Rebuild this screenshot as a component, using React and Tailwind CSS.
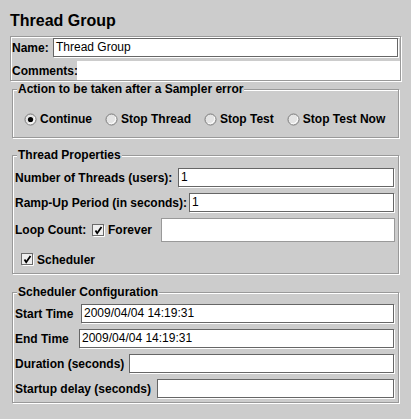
import React from 'react';

const groupBox =
  'relative mx-[2px] border border-[#999999] shadow-[inset_1px_1px_0_#ffffff,1px_1px_0_#ffffff]';

const Legend = ({ children }) => (
  <span className="absolute left-[4px] top-[-7px] bg-[#cccccc] px-[1px] font-bold leading-[13px]">
    {children}
  </span>
);

const Field = ({ value = '', disabled = false, className = '' }) => (
  <div
    className={`flex-1 bg-white pl-[2px] font-normal leading-[17px] whitespace-nowrap ${
      disabled
        ? 'border border-[#999999]'
        : 'border border-[#666666] shadow-[1px_1px_0_#ffffff]'
    } ${className}`}
  >
    {value}
  </div>
);

const Radio = ({ checked, label }) => (
  <label className="flex items-center gap-[3px]">
    <svg width="13" height="13" viewBox="0 0 13 13">
      <circle cx="6.5" cy="6.5" r="5.5" fill="#e4e4e4" stroke="#7a7a7a" />
      <path d="M10.6 3.8 A5.5 5.5 0 0 1 3.8 10.6" fill="none" stroke="#ffffff" />
      {checked && <circle cx="6.5" cy="6.5" r="2.6" fill="#000000" />}
    </svg>
    <span>{label}</span>
  </label>
);

const Check = () => (
  <svg width="13" height="13" viewBox="0 0 13 13" className="shrink-0">
    <rect x="0.5" y="0.5" width="11" height="11" fill="#eeeeee" stroke="#6b6b6b" />
    <path d="M1.5 12.5 H12.5 V1.5" fill="none" stroke="#ffffff" />
    <path d="M3.5 6.5 L5.2 9.2 L9.5 3" fill="none" stroke="#000000" strokeWidth="1.8" />
  </svg>
);

const Row = ({ label, width, value, className = '' }) => (
  <div className={`flex items-center h-[19px] ${className}`}>
    <span className="shrink-0 font-bold" style={{ width }}>
      {label}
    </span>
    <Field value={value} className="h-[19px]" />
  </div>
);

export default function App() {
  return (
    <div className="w-[411px] h-[419px] overflow-hidden bg-[#cccccc] text-black text-[12px] font-['Liberation_Sans',Arial,sans-serif]">
      <div className="px-[10px] pt-[12px]">
        <h1 className="text-[16px] leading-[18px] font-bold">Thread Group</h1>

        {/* name / comments */}
        <div className="mt-[6px] border border-[#999999] shadow-[inset_1px_1px_0_#ffffff,1px_1px_0_#ffffff] pl-[1px] pt-[1px]">
          <div className="flex items-center h-[19px] mr-[2px]">
            <span className="w-[41px] shrink-0 font-bold">Name:</span>
            <Field value="Thread Group" className="h-[19px]" />
          </div>
          <div className="flex items-center h-[19px] mt-[4px]">
            <span className="w-[65px] shrink-0 font-bold">Comments:</span>
            <div className="flex-1 h-[19px] bg-white" />
          </div>
        </div>

        {/* sampler error */}
        <div className={`${groupBox} mt-[8px] pt-[22px] pb-[11px]`}>
          <Legend>Action to be taken after a Sampler error</Legend>
          <div className="flex items-center gap-[13px] h-[14px] pl-[11px] font-bold leading-[14px]">
            <Radio checked label="Continue" />
            <Radio label="Stop Thread" />
            <Radio label="Stop Test" />
            <Radio label="Stop Test Now" />
          </div>
        </div>

        {/* thread properties */}
        <div className={`${groupBox} mt-[17px] pt-[12px] pb-[7px] pl-[2px] pr-[4px]`}>
          <Legend>Thread Properties</Legend>
          <Row label="Number of Threads (users):" width={163} value="1" />
          <Row label="Ramp-Up Period (in seconds):" width={174} value="1" className="mt-[6px]" />
          <div className="flex items-center h-[24px] mt-[6px]">
            <span className="w-[77px] shrink-0 font-bold">Loop Count:</span>
            <div className="w-[69px] shrink-0 flex items-center gap-[3px] font-bold">
              <Check />
              <span>Forever</span>
            </div>
            <Field disabled className="h-[24px] mr-[-1px]" />
          </div>
          <div className="flex items-center gap-[3px] h-[13px] mt-[11px] pl-[6px] font-bold">
            <Check />
            <span>Scheduler</span>
          </div>
        </div>

        {/* scheduler configuration */}
        <div className={`${groupBox} mt-[18px] pt-[11px] pb-[4px] pl-[2px] pr-[4px]`}>
          <Legend>Scheduler Configuration</Legend>
          <Row label="Start Time" width={66} value="2009/04/04 14:19:31" />
          <Row label="End Time" width={64} value="2009/04/04 14:19:31" className="mt-[6px]" />
          <Row label="Duration (seconds)" width={114} className="mt-[6px]" />
          <Row label="Startup delay (seconds)" width={142} className="mt-[6px]" />
        </div>
      </div>
    </div>
  );
}
